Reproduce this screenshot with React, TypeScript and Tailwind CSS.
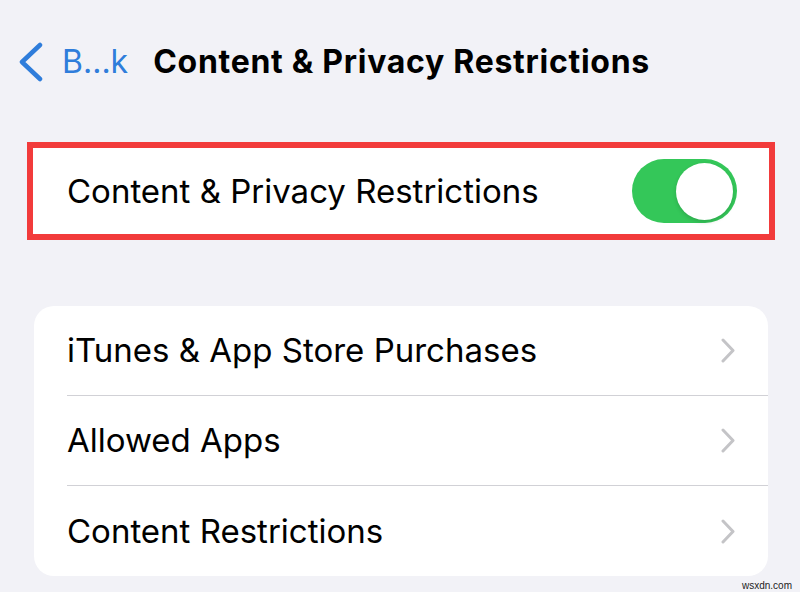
import React from 'react';

const ROWS = ['iTunes & App Store Purchases', 'Allowed Apps', 'Content Restrictions'];

function Chevron() {
  return (
    <svg width="14" height="25" viewBox="0 0 14 25" fill="none" className="shrink-0">
      <path d="M2 2 L12 12.5 L2 23" stroke="#c4c4c7" strokeWidth="3" strokeLinecap="round" strokeLinejoin="round" />
    </svg>
  );
}

export default function App() {
  return (
    <div
      className="h-[592px] w-[800px] overflow-hidden bg-[#f2f2f7] text-black"
      style={{ fontFamily: 'Inter, "Noto Sans", sans-serif' }}
    >
      {/* nav bar */}
      <header className="flex h-[125px] items-start pt-[42px]">
        <div className="flex items-center pl-[18px]">
          <svg width="26" height="40" viewBox="0 0 26 40" fill="none">
            <path d="M22 3 L4 20 L22 37" stroke="#2f7ddb" strokeWidth="4.5" strokeLinecap="round" strokeLinejoin="round" />
          </svg>
          <span className="ml-[18px] text-[32px] leading-[40px] text-[#2f7ddb]">B...k</span>
        </div>
        <h1 className="ml-[25px] text-[32px] font-bold leading-[40px] tracking-[0.72px]">
          Content &amp; Privacy Restrictions
        </h1>
      </header>

      {/* highlighted toggle row */}
      <div className="ml-[27px] mr-[25px] mt-[17px] flex h-[98px] items-center justify-between border-[6px] border-[#f23b3b] bg-white pl-[34px] pr-[32px]">
        <span className="text-[33px] leading-none">Content &amp; Privacy Restrictions</span>
        <div className="flex h-[64px] w-[105px] items-center justify-end rounded-full bg-[#34c759] pr-[4px]">
          <div className="h-[57px] w-[57px] rounded-full bg-white shadow-[0_2px_4px_rgba(0,0,0,0.15)]" />
        </div>
      </div>

      {/* list card */}
      <div className="ml-[34px] mr-[32px] mt-[66px] overflow-hidden rounded-[20px] bg-white">
        {ROWS.map((label, i) => (
          <div key={label} className="pl-[33px]">
            <div
              className={`flex h-[90px] items-center justify-between pr-[33px] ${
                i < ROWS.length - 1 ? 'border-b border-[#d1d1d6]' : ''
              }`}
            >
              <span className="text-[33px] leading-none">{label}</span>
              <Chevron />
            </div>
          </div>
        ))}
      </div>

      <div
        className="mt-[4px] pr-[8px] text-right text-[10px] leading-[12px] text-[#222]"
        style={{ fontFamily: '"Liberation Sans", sans-serif' }}
      >
        wsxdn.com
      </div>
    </div>
  );
}
